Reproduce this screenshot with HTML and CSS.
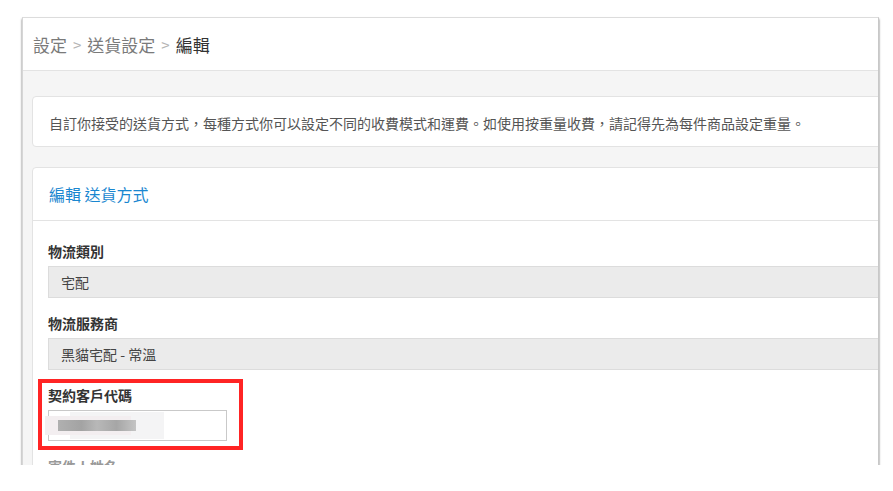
FILE: index.html
```html
<!DOCTYPE html>
<html lang="zh-Hant">
<head>
  <meta charset="UTF-8">
  <meta name="viewport" content="width=device-width, initial-scale=1.0">
  <title>送貨設定 - 編輯</title>
  <link rel="stylesheet" href="styles.css">
</head>
<body>

  <div class="window">
    <div class="page-header">
      <span class="crumb">設定</span>
      <span class="sep">&gt;</span>
      <span class="crumb">送貨設定</span>
      <span class="sep">&gt;</span>
      <span class="crumb current">編輯</span>
    </div>

    <div class="content">
      <div class="card info">
        自訂你接受的送貨方式，每種方式你可以設定不同的收費模式和運費。如使用按重量收費，請記得先為每件商品設定重量。
      </div>

      <div class="card">
        <div class="card-header">編輯 送貨方式</div>
        <div class="card-body">
          <div class="field">
            <label>物流類別</label>
            <div class="select">宅配</div>
          </div>
          <div class="field">
            <label>物流服務商</label>
            <div class="select">黑貓宅配 - 常溫</div>
          </div>
          <div class="field highlighted">
            <label>契約客戶代碼</label>
            <div class="input">
              <span class="blur"></span>
            </div>
            <div class="mark"></div>
          </div>
          <div class="field">
            <label class="faint">寄件人姓名</label>
          </div>
        </div>
      </div>
    </div>
  </div>

</body>
</html>
```

FILE: styles.css
```css
body {
  margin: 0;
  background-color: #fff;
  font-family: "Noto Sans CJK TC", "Noto Sans", sans-serif;
  color: #333;
}

.window {
  margin: 17px 0 0 22px;
  width: 857px;
  height: 448px;
  overflow: hidden;
  background-color: #f5f5f5;
  border-left: 1px solid #d6d6d6;
  border-right: 1px solid #c8c8c8;
  border-top: 1px solid #dcdcdc;
  box-sizing: border-box;
  box-shadow: 0 2px 2px rgba(0, 0, 0, 0.6);
}

.page-header {
  height: 52px;
  display: flex;
  align-items: center;
  gap: 6px;
  padding-left: 10px;
  background-color: #fff;
  border-bottom: 1px solid #e3e3e3;
  font-size: 17px;
  color: #7a7a7a;
}

.page-header .sep {
  font-size: 15px;
  color: #b5b5b5;
}

.page-header .current {
  color: #333;
}

.content {
  padding: 25px 0 0 9px;
  width: 960px;
}

.card {
  background-color: #fff;
  border: 1px solid #e3e3e3;
  border-radius: 4px;
  margin-bottom: 20px;
}

.card.info {
  display: flex;
  align-items: center;
  padding: 2px 16px 0;
  height: 47px;
  font-size: 14px;
  color: #555;
}

.card-header {
  height: 52px;
  display: flex;
  align-items: center;
  padding: 0 16px;
  border-bottom: 1px solid #e3e3e3;
  font-size: 16px;
  color: #1a87d0;
}

.card-body {
  padding: 20px 15px 0;
}

.field {
  position: relative;
  margin-bottom: 15px;
}

.field label {
  display: block;
  height: 20px;
  line-height: 20px;
  margin-bottom: 5px;
  font-size: 14px;
  font-weight: bold;
  color: #333;
}

.field label.faint {
  color: #999;
}

.select {
  height: 32px;
  box-sizing: border-box;
  display: flex;
  align-items: center;
  padding: 0 12px;
  background-color: #ebebeb;
  border: 1px solid #dcdcdc;
  font-size: 14px;
  color: #444;
}

.input {
  width: 179px;
  height: 31px;
  box-sizing: border-box;
  border: 1px solid #c9c9c9;
  background-color: #fff;
  display: flex;
  align-items: center;
  padding-left: 9px;
}

.blur {
  display: block;
  width: 78px;
  height: 11px;
  background: linear-gradient(90deg, #b0b0b0, #a3a3a3 30%, #b8b8b8 50%, #a6a6a6 75%, #c4c4c4);
  box-shadow: -9px 0 0 4px #f3eef0, 20px 0 0 8px #f4f4f5;
}

.mark {
  position: absolute;
  left: -10px;
  top: -6px;
  width: 205px;
  height: 71px;
  box-sizing: border-box;
  border: 4px solid #ff2424;
}
```
